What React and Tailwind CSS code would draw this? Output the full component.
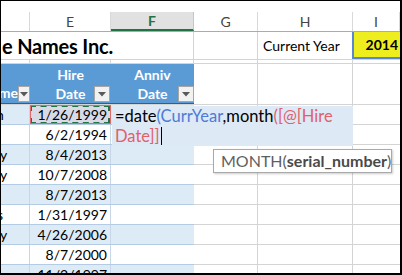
import React from 'react';

const rows = [
  { name: 'n', nx: '-ml-[5px]', date: '1/26/1999' },
  { name: '', nx: '', date: '6/2/1994' },
  { name: 'y', nx: '-ml-[1px]', date: '8/4/2013' },
  { name: 'y', nx: '-ml-[1px]', date: '10/7/2008' },
  { name: '', nx: '', date: '8/7/2013' },
  { name: 's', nx: '-ml-[4px]', date: '1/31/1997' },
  { name: 'y', nx: '-ml-[1px]', date: '4/26/2006' },
  { name: '', nx: '', date: '8/7/2000' },
  { name: '', nx: '', date: '11/2/1997' },
];

const DropButton = () => (
  <div className="w-[16px] h-[16px] bg-[#f2f2f2] border border-[#a6a6a6] flex items-center justify-center">
    <svg width="8" height="5" viewBox="0 0 8 5">
      <path d="M0 0 H8 L4 4.5 Z" fill="#595959" />
    </svg>
  </div>
);

const ColHead = ({ w, label, active }) => (
  <div
    className={`${w} h-full shrink-0 border-r flex items-center justify-center text-[14px] ${
      active
        ? 'bg-[#e1e1e1] border-[#c6c6c6] border-b-2 border-b-[#217346] text-[#217346] font-bold'
        : 'border-[#d9d9d9] text-[#444]'
    }`}
  >
    {label}
  </div>
);

export default function App() {
  return (
    <div
      className="relative w-[402px] h-[275px] overflow-hidden bg-white border-t border-l border-black border-r-2 border-b-2 text-black"
      style={{ fontFamily: 'Lato, "Open Sans", sans-serif' }}
    >
      {/* space under formula bar */}
      <div className="h-[11px]" />

      {/* column letters */}
      <div className="flex h-[20px] border-b border-[#ababab]">
        <div className="w-[29px] shrink-0 border-r border-[#d9d9d9]" />
        <ColHead w="w-[81px]" label="E" />
        <ColHead w="w-[83px]" label="F" active />
        <ColHead w="w-[64px]" label="G" />
        <ColHead w="w-[95px]" label="H" />
        <ColHead w="w-[47px]" label="I" />
      </div>

      {/* title row */}
      <div className="flex h-[28px] border-b border-[#d4d4d4]">
        <div className="w-[193px] shrink-0 border-r border-[#d4d4d4] flex items-center overflow-visible">
          <span className="text-[20px] font-bold whitespace-nowrap ml-[1px] tracking-[-0.2px]">e Names Inc.</span>
        </div>
        <div className="w-[64px] shrink-0 border-r border-[#d4d4d4]" />
        <div className="w-[95px] shrink-0 border-r border-[#d4d4d4] flex items-center pl-[5px] text-[14px]">
          Current Year
        </div>
        <div className="w-[48px] shrink-0 bg-[#eeee1e] border-l-2 border-b-2 border-[#5a86d6] -ml-[1px] flex items-center justify-end pr-[2px] text-[14px] font-bold">
          2014
        </div>
      </div>

      {/* thin row */}
      <div className="flex h-[4px] border-b border-[#d4d4d4]">
        <div className="w-[29px] shrink-0 border-r border-[#d4d4d4]" />
        <div className="w-[81px] shrink-0 border-r border-[#d4d4d4]" />
        <div className="w-[83px] shrink-0 border-r border-[#d4d4d4]" />
        <div className="w-[64px] shrink-0 border-r border-[#d4d4d4]" />
        <div className="w-[95px] shrink-0 border-r border-[#d4d4d4]" />
      </div>

      {/* table header */}
      <div className="flex h-[41px] border-b border-[#d4d4d4]">
        <div className="w-[193px] shrink-0 bg-[#5b9bd5] flex text-white font-bold text-[14px] border-b border-[#2e6e4a]">
          <div className="w-[29px] shrink-0 flex items-end justify-between pb-[1px] overflow-hidden">
            <span className="ml-[-20px] leading-[18px]">Name</span>
            <DropButton />
          </div>
          <div className="w-[81px] shrink-0 relative flex flex-col items-center justify-center leading-[19px]">
            <span>Hire</span>
            <span>Date</span>
            <div className="absolute right-[1px] bottom-[1px]">
              <DropButton />
            </div>
          </div>
          <div className="w-[83px] shrink-0 relative flex flex-col items-center justify-center leading-[19px]">
            <span>Anniv</span>
            <span>Date</span>
            <div className="absolute right-0 bottom-[1px]">
              <DropButton />
            </div>
          </div>
        </div>
        <div className="w-[64px] shrink-0 border-r border-[#d4d4d4]" />
        <div className="w-[95px] shrink-0 border-r border-[#d4d4d4]" />
      </div>

      {/* data rows */}
      {rows.map((r, i) => {
        const band = i % 2 === 0 ? 'bg-[#ddebf7]' : 'bg-white';
        const sel = i === 0;
        return (
          <div key={i} className="flex h-[20px] border-b border-[#d4d4d4] text-[14px]">
            <div className={`w-[193px] shrink-0 flex ${band} border-b border-[#b4cbe6] -mb-[1px]`}>
              <div className="w-[29px] shrink-0 border-r border-[#c9d6e8] overflow-hidden flex items-center">
                <span className={`${r.nx} whitespace-nowrap`}>{r.name}</span>
              </div>
              <div
                className={`w-[81px] shrink-0 flex items-center justify-end border-r border-[#c9d6e8] ${
                  sel ? 'bg-[#d8dbe6] outline outline-1 outline-[#e2686a] -outline-offset-1' : ''
                }`}
              >
                {sel ? (
                  <div className="w-full h-full border-2 border-dashed border-[#217346] flex items-center justify-end pr-[1px]">
                    {r.date}
                  </div>
                ) : (
                  <span className="pr-[3px]">{r.date}</span>
                )}
              </div>
              <div className="w-[83px] shrink-0" />
            </div>
            <div className="w-[64px] shrink-0 border-r border-[#d4d4d4]" />
            <div className="w-[95px] shrink-0 border-r border-[#d4d4d4]" />
          </div>
        );
      })}

      {/* in-cell formula editor */}
      <div className="absolute left-[111px] top-[105px] w-[241px] h-[40px] bg-[#dde9f5] px-[3px] text-[16.5px] leading-[20px]">
        <div className="whitespace-nowrap">
          <span>=date</span>
          <span className="text-[#4e7ad8]">(CurrYear</span>
          <span>,month</span>
          <span className="text-[#e0606b]">([@[Hire</span>
        </div>
        <div className="flex items-center">
          <span className="text-[#e0606b]">Date]]</span>
          <span className="w-[1px] h-[18px] bg-black ml-[1px]" />
        </div>
      </div>

      {/* function tooltip */}
      <div className="absolute left-[212px] top-[148px] w-[179px] h-[24px] bg-white border border-[#a9a9a9] shadow-[1px_1px_2px_rgba(0,0,0,0.2)] flex items-center pl-[7px] text-[16px] text-[#5f5f5f] whitespace-nowrap">
        MONTH(<span className="font-bold text-[#4a4a4a]">serial_number</span>)
      </div>
    </div>
  );
}
